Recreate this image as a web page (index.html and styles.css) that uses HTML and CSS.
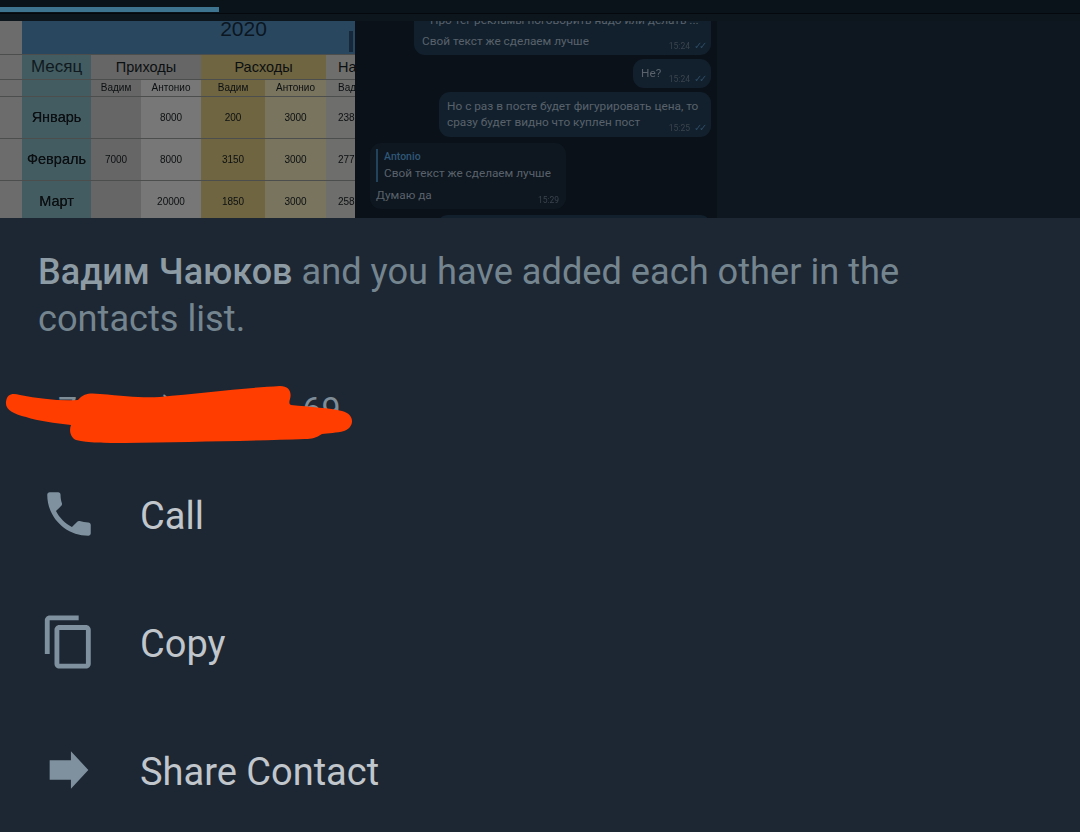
FILE: index.html
```html
<!DOCTYPE html>
<html lang="en">
<head>
    <meta charset="UTF-8">
    <title>Contact</title>
    <link rel="stylesheet" href="styles.css">
</head>
<body>
    <div class="backdrop">
        <div class="progress-track"><div class="progress-bar"></div></div>
        <div class="media-row">
            <table class="sheet">
                <colgroup>
                    <col class="col-stub"><col class="col-month"><col class="col-a"><col class="col-b"><col class="col-c"><col class="col-d"><col class="col-e">
                </colgroup>
                <tr class="row-title">
                    <td class="stub"></td>
                    <td class="title" colspan="6">2020<span class="title-mark"></span></td>
                </tr>
                <tr class="row-head">
                    <td class="stub"></td>
                    <td class="month month-head">Месяц</td>
                    <td class="group grey" colspan="2">Приходы</td>
                    <td class="group yellow" colspan="2">Расходы</td>
                    <td class="group grey left">На</td>
                </tr>
                <tr class="row-sub">
                    <td class="stub"></td>
                    <td class="month"></td>
                    <td class="grey">Вадим</td>
                    <td class="light">Антонио</td>
                    <td class="yellow">Вадим</td>
                    <td class="sand">Антонио</td>
                    <td class="grey left">Вад</td>
                </tr>
                <tr class="row-data">
                    <td class="stub"></td>
                    <td class="month">Январь</td>
                    <td class="grey"></td>
                    <td class="light">8000</td>
                    <td class="yellow">200</td>
                    <td class="sand">3000</td>
                    <td class="grey left">238</td>
                </tr>
                <tr class="row-data">
                    <td class="stub"></td>
                    <td class="month">Февраль</td>
                    <td class="grey">7000</td>
                    <td class="light">8000</td>
                    <td class="yellow">3150</td>
                    <td class="sand">3000</td>
                    <td class="grey left">277</td>
                </tr>
                <tr class="row-data">
                    <td class="stub"></td>
                    <td class="month">Март</td>
                    <td class="grey"></td>
                    <td class="light">20000</td>
                    <td class="yellow">1850</td>
                    <td class="sand">3000</td>
                    <td class="grey left">258</td>
                </tr>
            </table>

            <div class="chat">
                <div class="chat-list">
                    <div class="bubble out first">
                        <div class="quote-line">Про тег рекламы поговорить надо или делать ...</div>
                        <div class="bubble-text">Свой текст же сделаем лучше</div>
                        <div class="meta">15:24 <span class="ticks">✓✓</span></div>
                    </div>
                    <div class="bubble out short">
                        <div class="bubble-text">Не?</div>
                        <div class="meta">15:24 <span class="ticks">✓✓</span></div>
                    </div>
                    <div class="bubble out wide">
                        <div class="bubble-text">Но с раз в посте будет фигурировать цена, то<br>сразу будет видно что куплен пост</div>
                        <div class="meta">15:25 <span class="ticks">✓✓</span></div>
                    </div>
                    <div class="bubble in">
                        <div class="reply">
                            <div class="reply-name">Antonio</div>
                            <div class="bubble-text">Свой текст же сделаем лучше</div>
                        </div>
                        <div class="bubble-text">Думаю да</div>
                        <div class="meta">15:29</div>
                    </div>
                    <div class="bubble out last"></div>
                </div>
            </div>
            <div class="chat-side"></div>
        </div>
    </div>

    <div class="panel">
        <p class="about"><b>Вадим Чаюков</b> and you have added each other in the contacts list.</p>

        <div class="phone">
            <span class="phone-number">7          )               69</span>
            <svg class="scribble" viewBox="0 0 370 70" width="370" height="70">
                <path d="M6 19 C7 11 12 10 20 12 C40 16 60 18 78 17 C84 10 90 10 100 11 C125 13 140 15 160 14 C200 10 245 5 280 3 C289 3 292 9 290 16 C289 19 289 21 291 22 C310 24 330 25 342 28 C355 31 355 44 344 48 C337 50 328 50 322 51 C316 55 312 56 305 56 C250 58 180 59 125 60 C105 60 88 60 76 57 C70 54 69 47 71 42 C55 40 38 38 26 34 C14 31 5 27 6 19 Z"/>
            </svg>
        </div>

        <div class="action">
            <svg class="icon" viewBox="0 0 24 24"><path d="M6.62 10.79c1.44 2.83 3.76 5.14 6.59 6.59l2.2-2.2c.27-.27.67-.36 1.02-.24 1.12.37 2.33.57 3.57.57.55 0 1 .45 1 1V20c0 .55-.45 1-1 1-9.39 0-17-7.61-17-17 0-.55.45-1 1-1h3.5c.55 0 1 .45 1 1 0 1.25.2 2.45.57 3.57.11.35.03.74-.25 1.02l-2.2 2.2z"/></svg>
            <span>Call</span>
        </div>
        <div class="action">
            <svg class="icon" viewBox="0 0 24 24"><path d="M16 1H4c-1.1 0-2 .9-2 2v14h2V3h12V1zm3 4H8c-1.1 0-2 .9-2 2v14c0 1.100.9 2 2 2h11c1.100 0 2-.9 2-2V7c0-1.100-.9-2-2-2zm0 16H8V7h11v14z"/></svg>
            <span>Copy</span>
        </div>
        <div class="action">
            <svg class="icon" viewBox="0 0 24 24"><path d="M4 8h8.800V4.200L20 12l-7.200 7.800V16H4z"/></svg>
            <span>Share Contact</span>
        </div>
    </div>
</body>
</html>
```

FILE: styles.css
```css
/* Page */
body {
    margin: 0;
    width: 1080px;
    height: 832px;
    overflow: hidden;
    background: #1d2733;
    font-family: Roboto, "Noto Sans", sans-serif;
}

/* Dimmed content behind the sheet */
.backdrop {
    height: 218px;
    overflow: hidden;
    background: #0d151d;
}

.progress-track {
    height: 14px;
    padding-top: 7px;
    box-sizing: border-box;
    border-bottom: 1px solid #05090d;
    background: #0b131a;
}

.progress-bar {
    width: 219px;
    height: 5px;
    background: #3f7491;
}

.media-row {
    display: flex;
    height: 204px;
    padding-top: 7px;
    box-sizing: border-box;
}

/* Spreadsheet photo */
.sheet {
    flex: none;
    width: 355px;
    height: 197px;
    table-layout: fixed;
    border-collapse: collapse;
    font-family: "Liberation Sans", sans-serif;
    color: #0c0f11;
    filter: blur(0.5px);
}

.col-stub { width: 22px; }
.col-month { width: 69px; }
.col-a { width: 50px; }
.col-b { width: 60px; }
.col-c { width: 64px; }
.col-d { width: 61px; }
.col-e { width: 29px; }

.sheet td {
    padding: 0;
    text-align: center;
    overflow: hidden;
    white-space: nowrap;
    border-bottom: 1px solid #4c4e4d;
}

.row-title { height: 33px; }
.row-head { height: 25px; }
.row-sub { height: 17px; }
.row-data { height: 42px; }

.stub { background: #6c6c6c; }

.sheet .title {
    position: relative;
    background: #294860;
    color: #0b1622;
    font-size: 21px;
    line-height: 16px;
    vertical-align: top;
    padding-left: 110px;
    box-sizing: border-box;
}

.title-mark {
    position: absolute;
    right: 2px;
    top: 10px;
    width: 4px;
    height: 21px;
    background: #16283a;
}

.month {
    background: #425c61;
    font-size: 14.500px;
    text-shadow: 0 0 0.5px #111518;
}

.month-head { font-size: 17px; color: #10191e; text-shadow: none; }

.grey { background: #666666; }
.light { background: #777777; }
.yellow { background: #6f6540; }
.sand { background: #79745e; }

.group { font-size: 14.500px; }
.row-sub td { font-size: 10px; }
.row-data td { font-size: 10px; }
.row-data .month { font-size: 14.500px; }
.sheet .left { text-align: left; padding-left: 12px; background: #6e6e6c; }

/* Chat column */
.chat {
    flex: none;
    width: 362px;
    box-sizing: border-box;
    padding-left: 7px;
    background: #0a1118;
    overflow: hidden;
}

.chat-side {
    flex: 1;
    background: #0e1620;
}

.chat-list {
    display: flex;
    flex-direction: column;
    align-items: flex-end;
    gap: 4px;
    padding-right: 6px;
    margin-top: -13px;
    filter: blur(0.4px);
}

.bubble {
    position: relative;
    box-sizing: border-box;
    background: #12202d;
    border-radius: 11px;
    font-size: 11.800px;
    line-height: 16px;
    color: #59626b;
}

.first { width: 297px; height: 47px; padding: 0 8px; }
.short { width: 78px; height: 29px; padding: 6px 8px; }
.wide { width: 272px; height: 45px; padding: 6px 8px; }
.last { width: 274px; height: 30px; margin-top: 2px; }

.in {
    align-self: flex-start;
    width: 196px;
    height: 66px;
    margin: 2px 0 0 8px;
    padding: 6px;
    background: #0e161f;
}

.quote-line {
    height: 25px;
    line-height: 24px;
    padding-left: 8px;
    white-space: nowrap;
    overflow: hidden;
}

.bubble-text { white-space: nowrap; }

.reply {
    margin-bottom: 5px;
    padding-left: 6px;
    border-left: 2px solid #23435c;
}

.reply-name {
    color: #2f5877;
    font-weight: 500;
    font-size: 10.500px;
}

.reply .bubble-text { line-height: 17px; }

.meta {
    position: absolute;
    right: 7px;
    bottom: 3px;
    font-size: 8.500px;
    line-height: 12px;
    color: #3a444e;
}

.ticks {
    margin-left: 2px;
    font-size: 10px;
    color: #2c4a63;
    letter-spacing: -3px;
}

/* Contact sheet */
.panel {
    padding-top: 31px;
    font-size: 36px;
}

.about {
    margin: 0;
    padding: 0 38px;
    font-size: 36.200px;
    line-height: 46.500px;
    color: #75858f;
}

.about b {
    font-size: 36px;
    font-weight: 500;
    color: #8d9ba5;
}

.phone {
    position: relative;
    height: 74px;
    margin-top: 36px;
    padding-left: 58px;
    font-size: 34px;
    word-spacing: 0.100px;
    line-height: 63px;
    color: #7f8d98;
}

.phone-number { white-space: pre; }

.scribble {
    position: absolute;
    left: 0;
    top: 5px;
    fill: #ff3d00;
}

.action {
    display: flex;
    align-items: center;
    gap: 42px;
    height: 128px;
    padding-left: 40px;
    font-size: 38px;
    color: #c0c6cb;
}

.icon {
    flex: none;
    width: 58px;
    height: 58px;
    margin-bottom: 4px;
    fill: #7f919e;
}
```
